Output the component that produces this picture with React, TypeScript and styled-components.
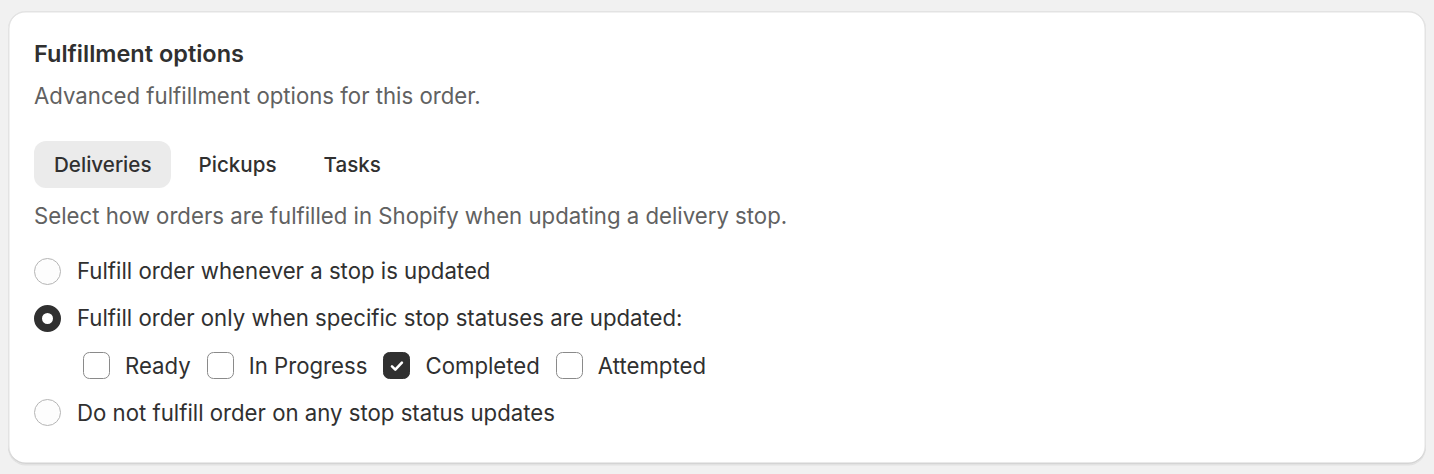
import React, { useState } from "react";
import styled, { createGlobalStyle } from "styled-components";

const GlobalStyle = createGlobalStyle`
  html, body {
    margin: 0;
    padding: 0;
    background: #f1f1f1;
  }
  body {
    font-family: Inter, "Noto Sans", sans-serif;
    color: #303030;
    -webkit-font-smoothing: antialiased;
  }
`;

const tabs = ["Deliveries", "Pickups", "Tasks"];
const statuses = ["Ready", "In Progress", "Completed", "Attempted"];

export default function App() {
  const [tab, setTab] = useState("Deliveries");
  const [mode, setMode] = useState("specific");
  const [checked, setChecked] = useState<string[]>(["Completed"]);

  const toggle = (s: string) => {
    setChecked((c) => (c.includes(s) ? c.filter((x) => x !== s) : [...c, s]));
  };

  return (
    <>
      <GlobalStyle />
      <Page>
        <Card>
          <Title>Fulfillment options</Title>
          <Subtitle>Advanced fulfillment options for this order.</Subtitle>
          <TabBar>
            {tabs.map((t) => (
              <Tab key={t} $active={tab === t} onClick={() => setTab(t)}>
                {t}
              </Tab>
            ))}
          </TabBar>
          <Description>
            Select how orders are fulfilled in Shopify when updating a delivery stop.
          </Description>
          <Options>
            <OptionRow onClick={() => setMode("any")}>
              <Radio $checked={mode === "any"} />
              <Label>Fulfill order whenever a stop is updated</Label>
            </OptionRow>
            <OptionRow onClick={() => setMode("specific")}>
              <Radio $checked={mode === "specific"} />
              <Label>Fulfill order only when specific stop statuses are updated:</Label>
            </OptionRow>
            <StatusRow>
              {statuses.map((s) => (
                <StatusItem key={s} onClick={() => toggle(s)}>
                  <Checkbox $checked={checked.includes(s)}>
                    {checked.includes(s) && (
                      <svg width="20" height="20" viewBox="0 0 20 20" fill="none">
                        <path
                          d="M5 10.4l3.3 3.2 6.6-7"
                          stroke="#fff"
                          strokeWidth="2.6"
                          strokeLinecap="round"
                          strokeLinejoin="round"
                        />
                      </svg>
                    )}
                  </Checkbox>
                  <Label>{s}</Label>
                </StatusItem>
              ))}
            </StatusRow>
            <OptionRow onClick={() => setMode("none")}>
              <Radio $checked={mode === "none"} />
              <Label>Do not fulfill order on any stop status updates</Label>
            </OptionRow>
          </Options>
        </Card>
      </Page>
    </>
  );
}

const Page = styled.div`
  padding: 11px 8px 10px 8px;
`;

const Card = styled.div`
  background: #ffffff;
  border-radius: 18px;
  padding: 28px 26px 36px 26px;
  box-shadow: 0 1.5px 0 0 rgba(26, 26, 26, 0.07),
    inset 0 -1.5px 0 0 #d4d4d4, inset 1.5px 0 0 0 #e3e3e3,
    inset -1.5px 0 0 0 #e3e3e3, inset 0 1.5px 0 0 #e3e3e3;
  display: flex;
  flex-direction: column;
`;

const Title = styled.div`
  font-size: 23.5px;
  font-weight: 600;
  line-height: 30px;
  color: #303030;
`;

const Subtitle = styled.div`
  font-size: 22.2px;
  line-height: 30px;
  color: #616161;
  margin-top: 12px;
`;

const TabBar = styled.div`
  display: flex;
  gap: 7px;
  margin-top: 30px;
`;

const Tab = styled.div<{ $active: boolean }>`
  height: 47px;
  padding: 0 20px;
  display: flex;
  align-items: center;
  border-radius: 12px;
  font-size: 20.6px;
  font-weight: 550;
  color: #303030;
  background: ${(p) => (p.$active ? "#ebebeb" : "transparent")};
  cursor: pointer;
`;

const Description = styled.div`
  font-size: 22.2px;
  line-height: 30px;
  color: #616161;
  margin-top: 13px;
`;

const Options = styled.div`
  display: flex;
  flex-direction: column;
  gap: 17.3px;
  margin-top: 25px;
`;

const OptionRow = styled.div`
  display: flex;
  align-items: center;
  gap: 16px;
  height: 30px;
  cursor: pointer;
`;

const Radio = styled.div<{ $checked: boolean }>`
  box-sizing: border-box;
  width: 27px;
  height: 27px;
  border-radius: 50%;
  flex-shrink: 0;
  border: ${(p) => (p.$checked ? "8.5px solid #303030" : "1.5px solid #b5b5b5")};
  background: ${(p) => (p.$checked ? "#ffffff" : "#fdfdfd")};
`;

const Label = styled.span`
  font-size: 22.2px;
  line-height: 30px;
  color: #303030;
  white-space: nowrap;
`;

const StatusRow = styled.div`
  display: flex;
  align-items: center;
  gap: 16px;
  padding-left: 49px;
  height: 30px;
`;

const StatusItem = styled.div`
  display: flex;
  align-items: center;
  gap: 15px;
  cursor: pointer;
`;

const Checkbox = styled.div<{ $checked: boolean }>`
  box-sizing: border-box;
  width: 27px;
  height: 27px;
  border-radius: 6.5px;
  flex-shrink: 0;
  display: flex;
  align-items: center;
  justify-content: center;
  background: ${(p) => (p.$checked ? "#303030" : "#ffffff")};
  border: 1.5px solid ${(p) => (p.$checked ? "#303030" : "#8a8a8a")};
`;
